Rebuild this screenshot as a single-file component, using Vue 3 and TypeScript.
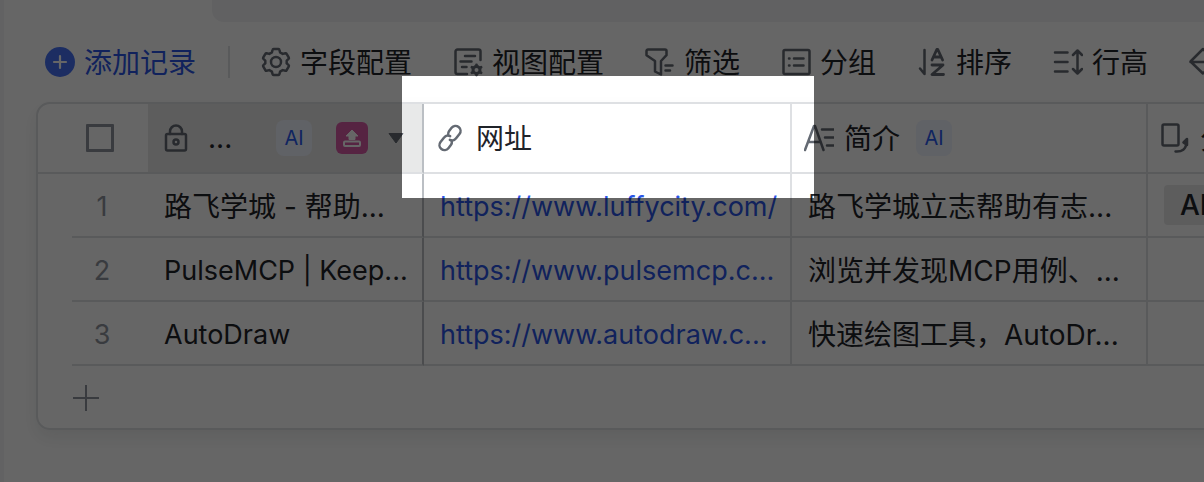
<script setup lang="ts">
interface Tool {
  key: string
  label: string
}

interface RecordRow {
  name: string
  latin: boolean
  url: string
  href: string
  intro: string
  tag: string
}

const tools: Tool[] = [
  { key: 'field', label: '字段配置' },
  { key: 'view', label: '视图配置' },
  { key: 'filter', label: '筛选' },
  { key: 'group', label: '分组' },
  { key: 'sort', label: '排序' },
  { key: 'height', label: '行高' },
  { key: 'fill', label: '' },
]

const rows: RecordRow[] = [
  { name: '路飞学城 - 帮助...', latin: false, url: 'https://www.luffycity.com/', href: 'https://www.luffycity.com/', intro: '路飞学城立志帮助有志...', tag: 'AI' },
  { name: 'PulseMCP | Keep...', latin: true, url: 'https://www.pulsemcp.c...', href: 'https://www.pulsemcp.com/', intro: '浏览并发现MCP用例、...', tag: '' },
  { name: 'AutoDraw', latin: true, url: 'https://www.autodraw.c...', href: 'https://www.autodraw.com/', intro: '快速绘图工具，AutoDr...', tag: '' },
]
</script>

<template>
  <main class="page">
    <div class="tabs"></div>

    <div class="toolbar">
      <button class="tool add" type="button">
        <svg class="icon" viewBox="0 0 30 30">
          <circle cx="15" cy="15" r="15" fill="#4672f6" />
          <path d="M15 9v12M9 15h12" stroke="#fff" stroke-width="2.2" stroke-linecap="round" />
        </svg>
        <span class="label">添加记录</span>
      </button>
      <span class="divider"></span>
      <div class="tools">
        <button v-for="tool in tools" :key="tool.key" class="tool" type="button" :aria-label="tool.label || '更多'">
          <svg class="icon line" viewBox="0 0 30 30">
            <template v-if="tool.key === 'field'">
              <path d="M12.600 2h4.800a1 1 0 0 1 1 .8l.7 2.600 2.600 1.500 2.700-.7a1 1 0 0 1 1.100.5l2.300 4a1 1 0 0 1-.2 1.200L25.700 13.600v2.800l1.900 1.700a1 1 0 0 1 .2 1.200l-2.300 4a1 1 0 0 1-1.100.5l-2.700-.7-2.600 1.500-.7 2.600a1 1 0 0 1-1 .8h-4.800a1 1 0 0 1-1-.8l-.7-2.600-2.600-1.500-2.700.7a1 1 0 0 1-1.100-.5l-2.300-4a1 1 0 0 1 .2-1.200l1.900-1.700v-2.800l-1.900-1.700a1 1 0 0 1-.2-1.200l2.300-4a1 1 0 0 1 1.100-.5l2.700.7 2.600-1.500.7-2.600a1 1 0 0 1 1-.8z" />
              <circle cx="15" cy="15" r="5" />
            </template>
            <template v-else-if="tool.key === 'view'">
              <path d="M14 27H4.500a2 2 0 0 1-2-2V4.500a2 2 0 0 1 2-2h21a2 2 0 0 1 2 2V13M12 9h10M7.500 14.500h11M9 20h4.500" />
              <circle cx="23.500" cy="23" r="3.500" stroke-width="3" />
              <path d="M23.500 18.500v-.5M23.500 27.500v.5M19.300 20.500l-.4-.2M27.700 25.500l.4.2M27.700 20.500l.4-.2M19.300 25.500l-.4.2" stroke-width="2.800" />
            </template>
            <template v-else-if="tool.key === 'filter'">
              <path d="M3 2.500H20a1.500 1.500 0 0 1 1.500 1.500v4.200L16 14v13.500l-6-3V14L1.500 8.200V4A1.500 1.500 0 0 1 3 2.500zM20.500 18.500h7M20.500 23.500h4.500" />
            </template>
            <template v-else-if="tool.key === 'group'">
              <rect x="2.500" y="3" width="26" height="24" rx="1.500" />
              <path d="M13 11.500h9.500M13 18.500h9.500M8 11.500h.5M8 18.500h.5" />
            </template>
            <template v-else-if="tool.key === 'sort'">
              <path d="M7.500 3v24l-4.500-5.500" />
              <path d="M15 13L19.800 2.500h1L25.600 13M16.800 10h7M15 18h11L15 27.500h11.500" stroke-width="2.800" />
            </template>
            <template v-else-if="tool.key === 'height'">
              <path d="M2 5.500h12.500M2 15h12.500M2 24.500h12.500M24.500 4v22M20 8l4.500-4.500L29 8M20 22l4.500 4.500L29 22" />
            </template>
            <template v-else>
              <path d="M1.500 14.500L14 2l12 12-12 12.500zM1.500 15H25" />
            </template>
          </svg>
          <span v-if="tool.label" class="label">{{ tool.label }}</span>
        </button>
      </div>
    </div>

    <section class="card">
      <table class="grid">
        <colgroup>
          <col class="c-gutter" />
          <col class="c-index" />
          <col class="c-name" />
          <col class="c-url" />
          <col class="c-intro" />
          <col class="c-tag" />
        </colgroup>
        <thead>
          <tr>
            <th colspan="2" class="check-cell">
              <input class="check" type="checkbox" aria-label="全选" />
            </th>
            <th class="name locked">
              <div class="head">
                <svg class="lock" viewBox="0 0 24 28">
                  <path d="M6 10V7.500a6 6 0 0 1 12 0V10" />
                  <rect x="2" y="10" width="20" height="16.500" rx="1.500" />
                  <circle cx="12" cy="18" r="2.500" />
                </svg>
                <span class="dots">...</span>
                <span class="ai">AI</span>
                <button class="upload" type="button" aria-label="上传">
                  <svg viewBox="0 0 32 32">
                    <path d="M16 8l6 6h-3v3.500h-6V14h-3z" fill="#fff" stroke="#fff" stroke-linejoin="round" />
                    <rect x="8" y="19.500" width="16" height="4.500" rx="1" fill="none" stroke="#fff" stroke-width="2" />
                  </svg>
                </button>
                <button class="caret" type="button" aria-label="字段菜单">
                  <svg viewBox="0 0 16 11"><path d="M1 .5h14L8 10z" fill="#646a73" stroke="#646a73" stroke-linejoin="round" /></svg>
                </button>
              </div>
            </th>
            <th>
              <div class="head">
                <svg class="icon line" viewBox="0 0 30 30">
                  <g transform="translate(14 15) rotate(38)">
                    <path d="M-3.500 -1.500A5 5 0 0 1 -5 -5V-9A5 5 0 0 1 5 -9V-3.500A5 5 0 0 1 1 1.500" />
                    <path d="M3.500 1.500A5 5 0 0 1 5 5V9A5 5 0 0 1 -5 9V3.500A5 5 0 0 1 -1 -1.500" />
                  </g>
                </svg>
                <span class="label">网址</span>
              </div>
            </th>
            <th>
              <div class="head">
                <svg class="icon line" viewBox="0 0 30 30">
                  <path d="M1 27L10 3h1l8.500 24M4.500 19h12M18 6.500h11.500M21 14.500h8.500M23 22.500h6.500" />
                </svg>
                <span class="label">简介</span>
                <span class="ai gap">AI</span>
              </div>
            </th>
            <th class="last">
              <div class="head">
                <svg class="icon line" viewBox="0 0 30 30">
                  <rect x="2.500" y="1.500" width="16" height="21" rx="1.500" />
                  <path d="M15.500 28.500c6 .5 11-2 11-10M23.500 19.500l3.500-3.500v6z" />
                </svg>
                <span class="label">分类</span>
              </div>
            </th>
          </tr>
        </thead>
        <tbody>
          <tr v-for="(row, i) in rows" :key="row.href">
            <td class="gutter"></td>
            <td class="index latin">{{ i + 1 }}</td>
            <td class="name" :class="{ latin: row.latin }">{{ row.name }}</td>
            <td class="latin"><a :href="row.href">{{ row.url }}</a></td>
            <td>{{ row.intro }}</td>
            <td class="last"><span v-if="row.tag" class="tag">{{ row.tag }}</span></td>
          </tr>
        </tbody>
      </table>
      <button class="add-row" type="button" aria-label="新增一行">
        <svg viewBox="0 0 28 28"><path d="M14 1v26M1 14h26" stroke="#8f959e" stroke-width="2" /></svg>
      </button>
    </section>

    <div class="spotlight"></div>
  </main>
</template>

<style>
body {
  margin: 0;
}
</style>

<style scoped>
.page {
  position: relative;
  box-sizing: border-box;
  min-height: 100vh;
  padding-left: 4px;
  overflow: hidden;
  background: linear-gradient(to right, #f5f6f7 4px, #fff 4px);
  color: #1f2329;
  font-family: Inter, "Noto Sans CJK SC", sans-serif;
  font-size: 28px;
  line-height: 40px;
}

button {
  display: flex;
  align-items: center;
  margin: 0;
  padding: 0;
  border: 0;
  background: none;
  color: inherit;
  font: inherit;
  white-space: nowrap;
}

.tabs {
  height: 22px;
  margin-left: 208px;
  border-bottom-left-radius: 12px;
  background: #f2f3f5;
}

.toolbar {
  display: flex;
  align-items: center;
  height: 80px;
  padding-left: 41px;
}

.tools {
  display: flex;
  gap: 41px;
}

.tool {
  flex: none;
  gap: 9px;
}

.label {
  padding-top: 2px;
}

.add {
  color: #2b55e6;
}

.divider {
  flex: none;
  width: 2px;
  height: 32px;
  margin: 0 31px 0 32px;
  background: #dee0e3;
}

.icon {
  flex: none;
  width: 30px;
  height: 30px;
}

.line,
.lock {
  fill: none;
  stroke: #646a73;
  stroke-width: 2.5;
  stroke-linecap: round;
  stroke-linejoin: round;
}

.card {
  width: max-content;
  margin-left: 32px;
  overflow: hidden;
  border: 2px solid #dee0e3;
  border-radius: 14px;
  box-shadow: 0 8px 16px rgba(31, 35, 41, 0.08);
}

.grid {
  width: 1400px;
  table-layout: fixed;
  border-collapse: separate;
  border-spacing: 0;
}

.c-gutter {
  width: 34px;
}

.c-index {
  width: 76px;
}

.c-name {
  width: 276px;
}

.c-url {
  width: 368px;
}

.c-intro {
  width: 356px;
}

th,
td {
  box-sizing: border-box;
  padding: 0 0 0 16px;
  overflow: hidden;
  border-right: 2px solid #dee0e3;
  border-bottom: 2px solid #dee0e3;
  font-weight: 400;
  text-align: left;
  white-space: nowrap;
}

th {
  height: 70px;
  padding-left: 12px;
}

td {
  height: 64px;
  padding-top: 4px;
}

.latin {
  font-size: 27px;
}

.last {
  padding-top: 0;
}

.name {
  border-right-color: #bbbfc4;
}

.locked {
  padding-left: 16px;
  background: #e8e9e9;
}

.check-cell,
.index {
  border-right: 0;
}

.check-cell {
  padding-left: 48px;
}

.gutter {
  border: 0;
}

.index {
  padding-right: 16px;
  padding-left: 0;
  color: #8f959e;
  text-align: center;
}

.check {
  display: block;
  width: 28px;
  height: 28px;
  margin: 0;
  appearance: none;
  border: 3px solid #8f959e;
  border-radius: 1px;
}

.head {
  display: flex;
  align-items: center;
  gap: 10px;
}

.lock {
  flex: none;
  width: 24px;
  height: 28px;
}

.dots {
  width: 58px;
  margin-left: 10px;
}

.ai {
  flex: none;
  width: 36px;
  border-radius: 8px;
  background: #f0f4ff;
  color: #2b5cf0;
  font-size: 20px;
  line-height: 36px;
  text-align: center;
}

.gap {
  margin-left: 6px;
}

.upload {
  flex: none;
  width: 32px;
  height: 32px;
  margin-left: 14px;
  border-radius: 6px;
  background: #d65aa6;
}

.caret {
  flex: none;
  width: 16px;
  height: 11px;
  margin-left: 10px;
}

a {
  color: #2b55e6;
  text-decoration: none;
}

.tag {
  display: block;
  width: max-content;
  padding: 0 16px;
  border-radius: 4px;
  background: #e8e8e9;
  font-weight: 500;
}

.add-row {
  height: 62px;
  padding-top: 2px;
  padding-left: 34px;
}

.add-row svg {
  width: 28px;
  height: 28px;
}

.spotlight {
  position: absolute;
  top: 76px;
  left: 402px;
  width: 412px;
  height: 122px;
  box-shadow: 0 0 0 4000px rgba(0, 0, 0, 0.6);
  pointer-events: none;
}
</style>
